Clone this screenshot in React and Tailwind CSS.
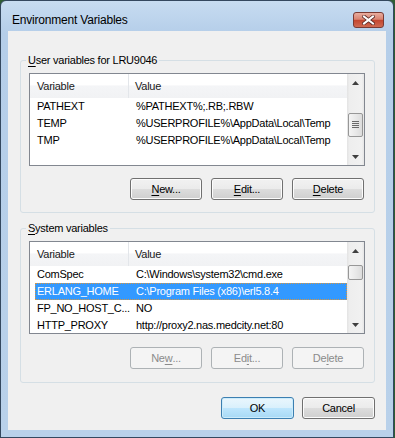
import React from 'react'

const userRows = [
  ['PATHEXT', '%PATHEXT%;.RB;.RBW'],
  ['TEMP', '%USERPROFILE%\\AppData\\Local\\Temp'],
  ['TMP', '%USERPROFILE%\\AppData\\Local\\Temp'],
]

const systemRows = [
  ['ComSpec', 'C:\\Windows\\system32\\cmd.exe'],
  ['ERLANG_HOME', 'C:\\Program Files (x86)\\erl5.8.4'],
  ['FP_NO_HOST_C...', 'NO'],
  ['HTTP_PROXY', 'http://proxy2.nas.medcity.net:80'],
]

function Arrow({ down }) {
  return (
    <svg width="7" height="4" viewBox="0 0 7 4" className={down ? 'rotate-180' : ''}>
      <path d="M0 4 L3.5 0 L7 4 Z" fill="#3f3f3f" />
    </svg>
  )
}

function ScrollBar({ thumb, grip }) {
  return (
    <div className="flex w-[17px] shrink-0 flex-col bg-[linear-gradient(90deg,#e3e3e3,#eeeeee_15%,#f1f1f1_85%,#e6e6e6)]">
      <div className="flex h-[17px] items-center justify-center">
        <Arrow />
      </div>
      <div className="flex-1">
        <div className={`${thumb} mx-[1px] flex items-center justify-center rounded-[2px] border border-[#979797] bg-[linear-gradient(90deg,#f4f4f4,#e9e9e9_50%,#dcdcdc)]`}>
          {grip && (
            <svg width="7" height="8" viewBox="0 0 7 8">
              <path d="M0 0.5 H7 M0 2.5 H7 M0 4.5 H7 M0 6.5 H7" stroke="#6a6a6a" strokeWidth="1" />
            </svg>
          )}
        </div>
      </div>
      <div className="flex h-[17px] items-center justify-center">
        <Arrow down />
      </div>
    </div>
  )
}

function ListBox({ rows, selected, thumb, grip }) {
  return (
    <div className="mt-[5px] flex h-[93px] border border-[#828790] bg-white">
      <div className="flex min-w-0 flex-1 flex-col">
        <div className="flex h-[24px] shrink-0 bg-[linear-gradient(#ffffff,#ffffff_45%,#f4f5f7_50%,#f1f2f4)] text-[#1a1a1a]">
          <div className="flex w-[99px] items-center border-r border-[#e3e6ea] pl-[7px]">Variable</div>
          <div className="flex flex-1 items-center pl-[6px]">Value</div>
        </div>
        {rows.map(([name, value], i) => (
          <div
            key={name}
            className={
              i === selected
                ? 'ml-[5px] flex h-[17px] items-center border border-dotted border-[#d9963f] bg-[#3399ff] text-white'
                : 'ml-[5px] flex h-[17px] items-center border border-transparent text-black'
            }
          >
            <div className="w-[100px] shrink-0 truncate pl-[1px] whitespace-nowrap">{name}</div>
            <div className="flex-1 whitespace-nowrap">{value}</div>
          </div>
        ))}
      </div>
      <ScrollBar thumb={thumb} grip={grip} />
    </div>
  )
}

function Button({ children, disabled, primary, wide }) {
  let cls = 'flex h-[22px] items-center justify-center rounded-[3px] border '
  if (disabled) cls += 'border-[#adb2b5] bg-[#f4f4f4] text-[#8b8b8b]'
  else if (primary)
    cls += 'border-[#3c7fb1] bg-[linear-gradient(#eaf6fd,#d9f0fc_50%,#bee6fd_50%,#a7d9f5)] text-black shadow-[inset_0_0_0_1px_#ccecfb]'
  else
    cls += 'border-[#707070] bg-[linear-gradient(#f2f2f2,#ebebeb_50%,#dddddd_50%,#cfcfcf)] text-black shadow-[inset_0_0_0_1px_#fcfcfc]'
  return <div className={`${cls} ${wide ? 'w-[73px]' : 'w-[72px]'}`}>{children}</div>
}

function U({ children }) {
  return <span className="underline decoration-1 underline-offset-[2px]">{children}</span>
}

export default function App() {
  return (
    <div className="h-[438px] w-[395px] bg-[#2f5e34] font-['Liberation_Sans',Arial,sans-serif] text-[11px] tracking-[-0.25px]">
      <div className="flex h-[438px] w-[394px] flex-col rounded-t-[6px] border border-[#34485f] bg-[linear-gradient(#c7dcf1,#b5cee9_32px,#b9d1ea)]">
        <div className="flex h-[30px] shrink-0 items-center justify-between pt-[8px] pl-[11px] pr-[9px]">
          <span className="text-[12px] tracking-[-0.2px] text-black">Environment Variables</span>
          <div className="flex h-[16px] w-[31px] items-center justify-center rounded-[3px] border border-[#7a3a33] bg-[linear-gradient(#e9ad9f,#d88371_45%,#c4462f_52%,#cf6a52)]">
            <svg width="13" height="10" viewBox="0 0 13 10">
              <path d="M2 1.5 L11 8.5 M11 1.5 L2 8.5" stroke="#5b2a26" strokeWidth="3.6" strokeLinecap="square" />
              <path d="M2 1.5 L11 8.5 M11 1.5 L2 8.5" stroke="#ffffff" strokeWidth="2" strokeLinecap="square" />
            </svg>
          </div>
        </div>
        <div className="flex-1 px-[7px] pb-[7px]">
          <div className="flex h-full flex-col bg-[#f0f0f0] pt-[21px] pr-[11px] pl-[12px]">
            <fieldset className="rounded-[3px] border border-[#d5dfe5] pr-[9px] pb-[12px] pl-[8px]">
              <legend className="-ml-[3px] h-[16px] px-[2px] leading-[16px] text-black">
                <U>U</U>ser variables for LRU9046
              </legend>
              <ListBox rows={userRows} selected={-1} thumb="mt-[22px] h-[24px]" grip />
              <div className="mt-[12px] flex justify-end gap-[9px] pr-[1px]">
                <Button>
                  <U>N</U>ew...
                </Button>
                <Button>
                  <U>E</U>dit...
                </Button>
                <Button>
                  <U>D</U>elete
                </Button>
              </div>
            </fieldset>
            <fieldset className="mt-[7px] rounded-[3px] border border-[#d5dfe5] pr-[9px] pb-[13px] pl-[8px]">
              <legend className="-ml-[3px] h-[16px] px-[2px] leading-[16px] text-black">
                <U>S</U>ystem variables
              </legend>
              <ListBox rows={systemRows} selected={1} thumb="mt-[6px] h-[15px]" />
              <div className="mt-[13px] flex justify-end gap-[9px] pr-[1px]">
                <Button disabled>
                  Ne<U>w</U>...
                </Button>
                <Button disabled>
                  Ed<U>i</U>t...
                </Button>
                <Button disabled>
                  De<U>l</U>ete
                </Button>
              </div>
            </fieldset>
            <div className="mt-[14px] flex justify-end gap-[8px]">
              <Button primary wide>
                OK
              </Button>
              <Button wide>Cancel</Button>
            </div>
          </div>
        </div>
      </div>
    </div>
  )
}
